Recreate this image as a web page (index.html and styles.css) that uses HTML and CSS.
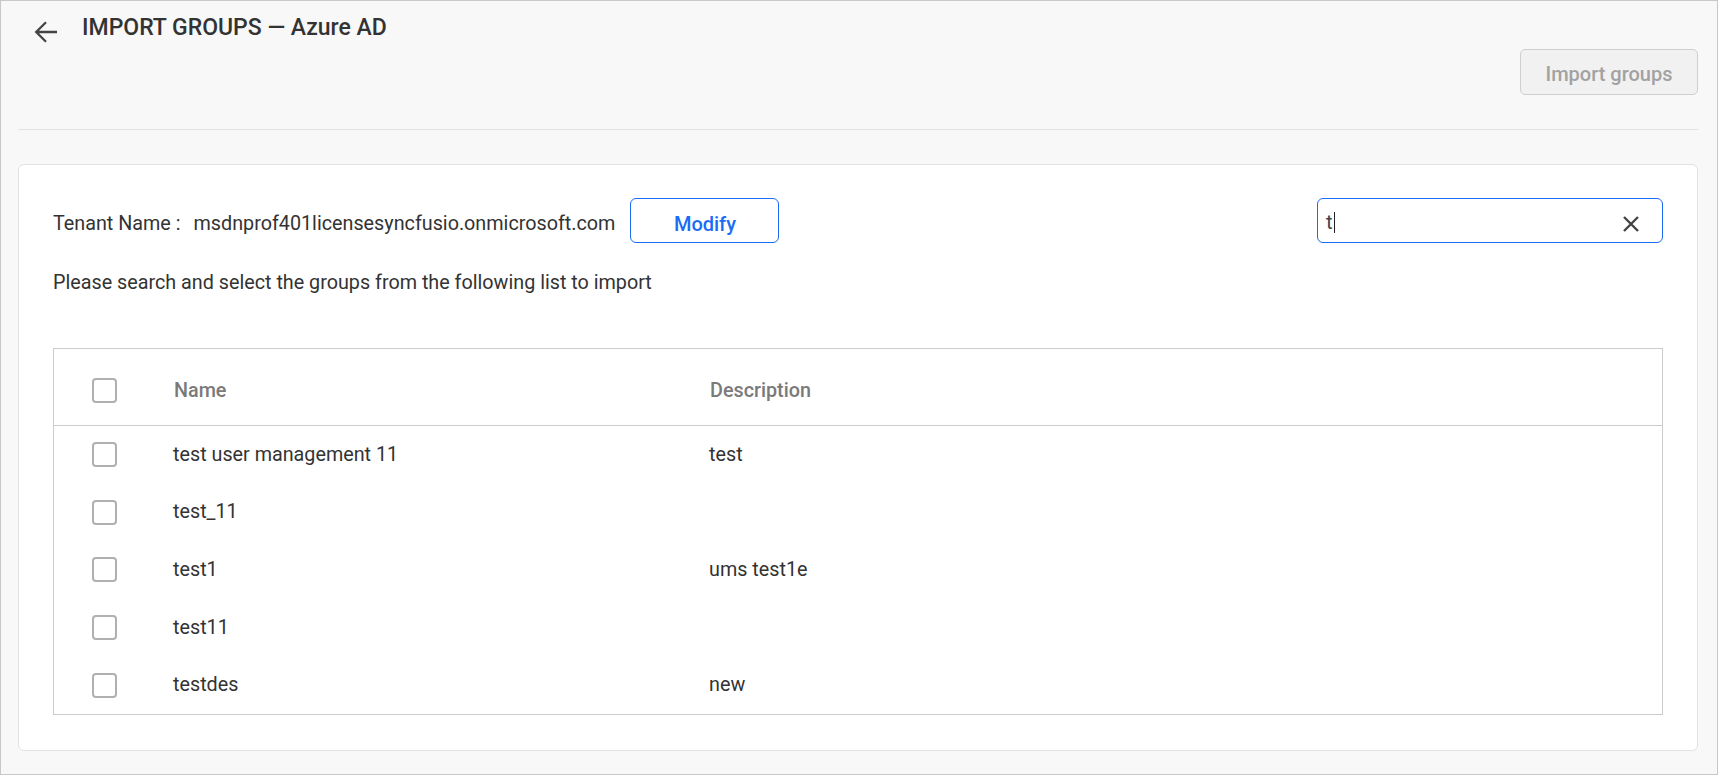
FILE: index.html
```html
<!DOCTYPE html>
<html lang="en">
<head>
<meta charset="utf-8">
<title>Import Groups - Azure AD</title>
<link rel="stylesheet" href="styles.css">
</head>
<body>
<div class="page">
  <header class="top">
    <div class="title-row">
      <svg class="back" viewBox="0 0 24 22" aria-hidden="true">
        <path d="M23 11H2.5M12 1.2L2.2 11l9.8 9.8" fill="none" stroke="#444" stroke-width="2.3"/>
      </svg>
      <h1 class="title">IMPORT GROUPS — Azure AD</h1>
    </div>
    <div class="actions">
      <button class="btn-import" disabled>Import groups</button>
    </div>
  </header>

  <section class="card">
    <div class="tenant-row">
      <div class="tenant">
        <span class="label">Tenant Name :</span>
        <span class="value">msdnprof401licensesyncfusio.onmicrosoft.com</span>
        <button class="btn-modify">Modify</button>
      </div>
      <div class="search">
        <span class="search-text">t</span><span class="caret"></span>
        <svg class="clear" viewBox="0 0 18 18" aria-hidden="true">
          <path d="M2 2L16 16M16 2L2 16" fill="none" stroke="#444" stroke-width="2.4"/>
        </svg>
      </div>
    </div>

    <p class="hint">Please search and select the groups from the following list to import</p>

    <div class="grid">
      <div class="row head">
        <span class="cell"><span class="cb"></span></span>
        <span class="cell name">Name</span>
        <span class="cell desc">Description</span>
      </div>
      <div class="row">
        <span class="cell"><span class="cb"></span></span>
        <span class="cell">test user management 11</span>
        <span class="cell">test</span>
      </div>
      <div class="row">
        <span class="cell"><span class="cb"></span></span>
        <span class="cell">test_11</span>
        <span class="cell"></span>
      </div>
      <div class="row">
        <span class="cell"><span class="cb"></span></span>
        <span class="cell">test1</span>
        <span class="cell">ums test1e</span>
      </div>
      <div class="row">
        <span class="cell"><span class="cb"></span></span>
        <span class="cell">test11</span>
        <span class="cell"></span>
      </div>
      <div class="row">
        <span class="cell"><span class="cb"></span></span>
        <span class="cell">testdes</span>
        <span class="cell">new</span>
      </div>
    </div>
  </section>
</div>
</body>
</html>
```
FILE: styles.css
```css
html, body {
  margin: 0;
  padding: 0;
}

body {
  font-family: Roboto, "Liberation Sans", Arial, sans-serif;
  color: #333;
}

.page {
  height: 775px;
  box-sizing: border-box;
  border: 1px solid #c8c8c8;
  background: #f8f8f8;
  padding: 0 19px 0 17px;
}

/* ---------- header ---------- */
.top {
  padding-top: 14px;
  padding-bottom: 34px;
  border-bottom: 1px solid #e2e2e2;
}

.title-row {
  display: flex;
  align-items: center;
  height: 26px;
}

.back {
  width: 24px;
  height: 22px;
  margin-left: 16px;
  margin-right: 24px;
  margin-top: 7px;
  flex: none;
}

.title {
  margin: 0;
  font-size: 23px;
  font-weight: 500;
  line-height: 26px;
  color: #333;
}

.actions {
  display: flex;
  justify-content: flex-end;
  margin-top: 8px;
}

.btn-import {
  width: 178px;
  height: 46px;
  box-sizing: border-box;
  border: 1px solid #cfcfcf;
  border-radius: 5px;
  background: #f1f1f1;
  color: #a2a2a2;
  font-family: inherit;
  font-size: 20px;
  font-weight: 500;
  padding: 3px 0 0;
}

/* ---------- card ---------- */
.card {
  margin-top: 34px;
  background: #fff;
  border: 1px solid #e2e2e2;
  border-radius: 6px;
  padding: 33px 34px 35px;
}

.tenant-row {
  display: flex;
  justify-content: space-between;
  height: 45px;
}

.tenant {
  display: flex;
  align-items: center;
}

.label,
.value {
  font-size: 19.75px;
  line-height: 24px;
  padding-top: 6px;
  color: #333;
}

.value {
  margin-left: 13px;
}

.btn-modify {
  margin-left: 15px;
  width: 149px;
  height: 45px;
  box-sizing: border-box;
  border: 1px solid #1a6cf5;
  border-radius: 6px;
  background: #fff;
  color: #1a6cf5;
  font-family: inherit;
  font-size: 20px;
  font-weight: 500;
  line-height: 24px;
  padding: 6px 0 0;
}

.search {
  width: 346px;
  height: 45px;
  box-sizing: border-box;
  border: 1px solid #1a6cf5;
  border-radius: 6px;
  display: flex;
  align-items: center;
  padding: 0 22px 0 8px;
}

.search-text {
  font-size: 20px;
  line-height: 24px;
  color: #444;
  padding-top: 3px;
}

.caret {
  width: 1px;
  height: 21px;
  background: #222;
  margin-left: 1px;
  margin-top: 4px;
}

.clear {
  width: 18px;
  height: 18px;
  margin-left: auto;
  margin-top: 7px;
}

.hint {
  margin: 28px 0 0;
  font-size: 19.75px;
  line-height: 24px;
  color: #333;
}

/* ---------- table ---------- */
.grid {
  margin-top: 53px;
  border: 1px solid #cbcbcb;
}

.row {
  display: grid;
  grid-template-columns: 119px 536px 1fr;
  align-items: center;
  height: 57.6px;
  font-size: 19.75px;
  line-height: 24px;
  color: #333;
}

.row.head {
  height: 77px;
  box-sizing: border-box;
  padding-top: 7px;
  border-bottom: 1px solid #cbcbcb;
  color: #7a7a7a;
  font-weight: 500;
}

.head .name {
  padding-left: 1px;
}

.head .desc {
  padding-left: 1px;
}

.cell {
  display: flex;
  align-items: center;
}

.cb {
  width: 25px;
  height: 25px;
  box-sizing: border-box;
  border: 2px solid #b0b0b0;
  border-radius: 4px;
  margin-left: 38px;
}
```
